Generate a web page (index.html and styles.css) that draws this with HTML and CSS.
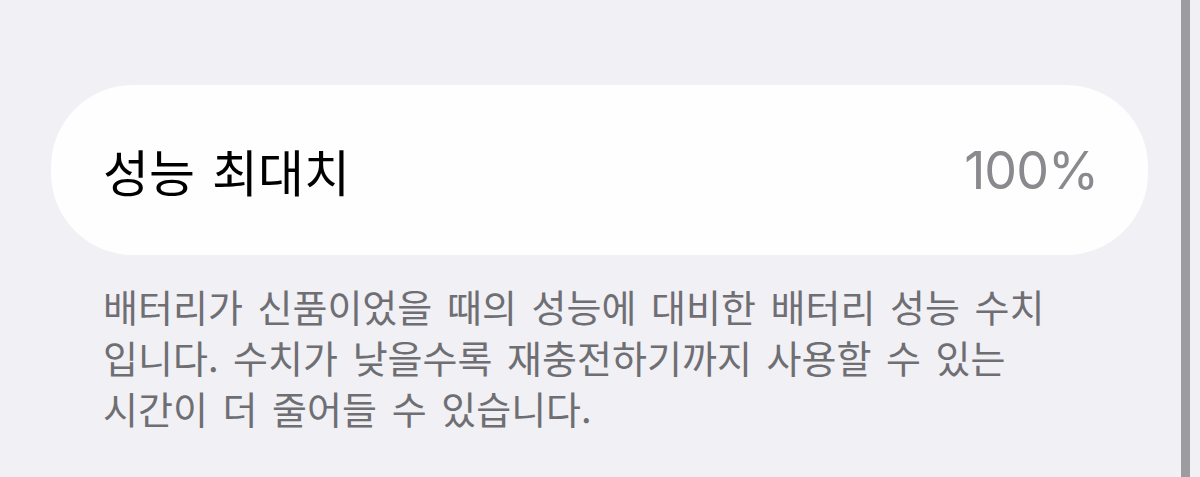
FILE: index.html
```html
<!DOCTYPE html>
<html lang="ko">
<head>
    <meta charset="UTF-8">
    <meta name="viewport" content="width=device-width, initial-scale=1.0">
    <title>배터리 성능 상태</title>
    <link rel="stylesheet" href="styles.css">
</head>
<body>
    <div class="screen">
        <div class="settings">
            <div class="row">
                <span class="row-label">성능 최대치</span>
                <span class="row-value">100%</span>
            </div>
            <p class="footnote">
                배터리가 신품이었을 때의 성능에 대비한 배터리 성능 수치<br>
                입니다. 수치가 낮을수록 재충전하기까지 사용할 수 있는<br>
                시간이 더 줄어들 수 있습니다.
            </p>
        </div>
        <div class="scroll-track"></div>
    </div>
</body>
</html>
```

FILE: styles.css
```css
body {
    margin: 0;
    background-color: #f0f0f5;
    font-family: Inter, "Noto Sans CJK KR", sans-serif;
}

.screen {
    display: flex;
    height: 477px;
    overflow: hidden;
}

.settings {
    flex: 1;
    padding: 85px 33px 0 51px;
}

.row {
    display: flex;
    align-items: center;
    justify-content: space-between;
    height: 170px;
    padding: 0 50px 0 52px;
    background-color: #fefefe;
    border-radius: 82px;
}

.row-label {
    font-family: "Noto Sans CJK KR", sans-serif;
    font-size: 50px;
    word-spacing: 3px;
    color: #000;
}

.row-value {
    font-size: 52px;
    letter-spacing: -1px;
    color: #8a8a8e;
}

.footnote {
    margin: 25px 0 0 52px;
    font-family: "Noto Sans CJK KR", sans-serif;
    font-size: 38px;
    line-height: 51px;
    word-spacing: 4px;
    color: #6e6e73;
}

.scroll-track {
    width: 9px;
    margin-right: 10px;
    background-color: #9b9ba0;
}
```
